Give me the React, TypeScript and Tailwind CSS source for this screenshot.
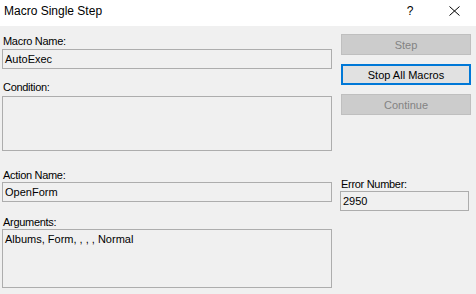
import React from "react";

const font = "font-['Liberation_Sans',Arial,sans-serif]";

const Label: React.FC<{ text: string; className?: string }> = ({ text, className }) => (
  <div className={`h-[14px] pl-[1px] text-[11px] leading-[14px] tracking-[-0.3px] text-black ${className || ""}`}>
    {text}
  </div>
);

const Field: React.FC<{ value?: string; height: number; multi?: boolean; className?: string }> = ({
  value,
  multi,
  className,
}) => (
  <div
    className={`border border-[#adadad] bg-[#f0f0f0] px-[2px] text-[11px] text-black ${
      multi ? "pt-[2px] leading-[14px]" : "flex items-center leading-[14px]"
    } ${className || ""}`}
  >
    {value}
  </div>
);

const DialogButton: React.FC<{ label: string; disabled?: boolean; focused?: boolean }> = ({
  label,
  disabled,
  focused,
}) => (
  <button
    className={`flex h-[21px] w-[130px] items-center justify-center text-[11px] leading-[14px] ${
      disabled
        ? "border border-[#bfbfbf] bg-[#cccccc] text-[#838383]"
        : focused
        ? "border-2 border-[#0078d7] bg-[#e1e1e1] text-black"
        : "border border-[#adadad] bg-[#e1e1e1] text-black"
    }`}
  >
    {label}
  </button>
);

export default function App() {
  return (
    <div className={`${font} h-[294px] w-[476px] overflow-hidden bg-[#f0f0f0]`}>
      {/* title bar */}
      <div className="flex h-[26px] bg-white">
        <div className="flex-1 pl-[4px] pt-[3px] text-[12px] leading-[16px] text-black">Macro Single Step</div>
        <div className="flex w-[46px] justify-center pt-[3px] text-[12px] leading-[16px] text-black">?</div>
        <div className="flex w-[43px] justify-center pt-[6px]">
          <svg width="11" height="10" viewBox="0 0 11 10">
            <path d="M0.5 0.5 L10.5 9.5 M10.5 0.5 L0.5 9.5" stroke="#000" strokeWidth="1" fill="none" />
          </svg>
        </div>
      </div>

      {/* body */}
      <div className="flex pl-[2px] pt-[8px]">
        <div className="flex w-[330px] flex-col">
          <Label text="Macro Name:" />
          <Field value="AutoExec" height={20} className="mt-[1px] h-[20px]" />
          <Label text="Condition:" className="mt-[11px]" />
          <Field height={55} multi className="mt-[2px] h-[55px]" />
          <Label text="Action Name:" className="mt-[17px]" />
          <Field value="OpenForm" height={20} className="h-[20px]" />
          <Label text="Arguments:" className="mt-[13px]" />
          <Field value="Albums, Form, , , , Normal" height={59} multi className="h-[59px]" />
        </div>

        <div className="ml-[9px] flex w-[130px] flex-col">
          <div className="flex flex-col gap-[9px]">
            <DialogButton label="Step" disabled />
            <DialogButton label="Stop All Macros" focused />
            <DialogButton label="Continue" disabled />
          </div>
          <Label text="Error Number:" className="mt-[62px] -ml-[1px]" />
          <Field value="2950" height={20} className="-ml-[1px] h-[20px] w-[129px]" />
        </div>
      </div>
    </div>
  );
}
